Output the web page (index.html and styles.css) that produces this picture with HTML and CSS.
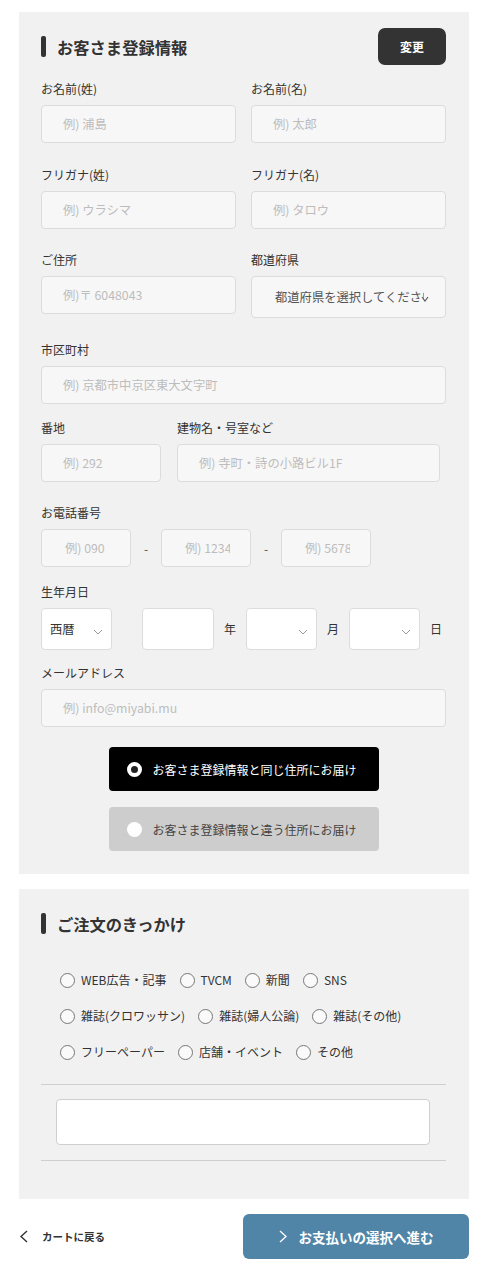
FILE: index.html
```html
<!DOCTYPE html>
<html lang="ja">
<head>
<meta charset="utf-8">
<title>お客さま登録情報</title>
<link rel="stylesheet" href="styles.css">
</head>
<body>
<div class="page">
  <section class="panel panel-customer">
    <div class="panel-head">
      <h2 class="panel-title">お客さま登録情報</h2>
      <button class="btn-edit" type="button">変更</button>
    </div>

    <div class="row cols-2 mt-14">
      <div class="field">
        <div class="label">お名前(姓)</div>
        <input class="input" placeholder="例) 浦島">
      </div>
      <div class="field">
        <div class="label">お名前(名)</div>
        <input class="input" placeholder="例) 太郎">
      </div>
    </div>

    <div class="row cols-2 mt-22">
      <div class="field">
        <div class="label">フリガナ(姓)</div>
        <input class="input" placeholder="例) ウラシマ">
      </div>
      <div class="field">
        <div class="label">フリガナ(名)</div>
        <input class="input" placeholder="例) タロウ">
      </div>
    </div>

    <div class="row cols-2 mt-21">
      <div class="field">
        <div class="label">ご住所</div>
        <input class="input" placeholder="例)〒 6048043">
      </div>
      <div class="field">
        <div class="label">都道府県</div>
        <div class="select select-pref">
          <span class="select-text">都道府県を選択してください</span>
          <svg class="chev-small" width="8" height="6" viewBox="0 0 8 6"><path d="M1 1 L4 5 L7 1" fill="none" stroke="#555" stroke-width="1.1"/></svg>
        </div>
      </div>
    </div>

    <div class="row mt-22">
      <div class="field">
        <div class="label">市区町村</div>
        <input class="input" placeholder="例) 京都市中京区東大文字町">
      </div>
    </div>

    <div class="row cols-addr mt-14">
      <div class="field">
        <div class="label">番地</div>
        <input class="input" placeholder="例) 292">
      </div>
      <div class="field">
        <div class="label">建物名・号室など</div>
        <input class="input" placeholder="例) 寺町・詩の小路ビル1F">
      </div>
    </div>

    <div class="row mt-21">
      <div class="field">
        <div class="label">お電話番号</div>
        <div class="phone">
          <input class="input input-tel" placeholder="例) 090">
          <span class="dash">-</span>
          <input class="input input-tel" placeholder="例) 1234">
          <span class="dash">-</span>
          <input class="input input-tel" placeholder="例) 5678">
        </div>
      </div>
    </div>

    <div class="row mt-15">
      <div class="field">
        <div class="label">生年月日</div>
        <div class="birth">
          <div class="select select-sm">
            <span class="select-text">西暦</span>
            <svg class="chev" width="10" height="6" viewBox="0 0 10 6"><path d="M1 1 L5 5 L9 1" fill="none" stroke="#999" stroke-width="1"/></svg>
          </div>
          <div class="box-year"></div>
          <span class="unit">年</span>
          <div class="select select-sm select-end">
            <svg class="chev" width="10" height="6" viewBox="0 0 10 6"><path d="M1 1 L5 5 L9 1" fill="none" stroke="#999" stroke-width="1"/></svg>
          </div>
          <span class="unit">月</span>
          <div class="select select-sm select-end">
            <svg class="chev" width="10" height="6" viewBox="0 0 10 6"><path d="M1 1 L5 5 L9 1" fill="none" stroke="#999" stroke-width="1"/></svg>
          </div>
          <span class="unit unit-last">日</span>
        </div>
      </div>
    </div>

    <div class="row mt-13">
      <div class="field">
        <div class="label">メールアドレス</div>
        <input class="input" placeholder="例) info@miyabi.mu">
      </div>
    </div>

    <div class="delivery">
      <div class="deliv-btn deliv-on"><span class="dot dot-on"></span>お客さま登録情報と同じ住所にお届け</div>
      <div class="deliv-btn deliv-off"><span class="dot"></span>お客さま登録情報と違う住所にお届け</div>
    </div>
  </section>

  <section class="panel panel-reason">
    <div class="panel-head">
      <h2 class="panel-title">ご注文のきっかけ</h2>
    </div>
    <div class="options">
      <div class="opt-row">
        <span class="opt"><span class="circle"></span>WEB広告・記事</span>
        <span class="opt"><span class="circle"></span>TVCM</span>
        <span class="opt"><span class="circle"></span>新聞</span>
        <span class="opt"><span class="circle"></span>SNS</span>
      </div>
      <div class="opt-row">
        <span class="opt"><span class="circle"></span>雑誌(クロワッサン)</span>
        <span class="opt"><span class="circle"></span>雑誌(婦人公論)</span>
        <span class="opt"><span class="circle"></span>雑誌(その他)</span>
      </div>
      <div class="opt-row">
        <span class="opt"><span class="circle"></span>フリーペーパー</span>
        <span class="opt"><span class="circle"></span>店舗・イベント</span>
        <span class="opt"><span class="circle"></span>その他</span>
      </div>
    </div>
    <hr class="divider divider-top">
    <div class="textarea-wrap"><textarea class="textarea"></textarea></div>
    <hr class="divider divider-bottom">
  </section>

  <div class="footer-bar">
    <a class="back" href="#">
      <svg width="9" height="13" viewBox="0 0 9 13"><path d="M8 1 L2 6.5 L8 12" fill="none" stroke="#333" stroke-width="1.4"/></svg>
      <span>カートに戻る</span>
    </a>
    <button class="btn-next" type="button">
      <svg width="8" height="13" viewBox="0 0 8 13"><path d="M1 1 L7 6.5 L1 12" fill="none" stroke="#fff" stroke-width="1.3"/></svg>
      <span>お支払いの選択へ進む</span>
    </button>
  </div>
</div>
</body>
</html>
```

FILE: styles.css
```css
* { box-sizing: border-box; }

body {
  margin: 0;
  background: #fff;
  font-family: "Noto Sans CJK JP", "Noto Sans", sans-serif;
  color: #333;
}

.page {
  width: 450px;
  margin: 12px 20px 0 19px;
}

.panel {
  background: #f1f1f1;
  padding: 16px 23px 0 22px;
}

.panel-customer { padding-bottom: 23px; }

.panel-reason {
  margin-top: 15px;
  padding-bottom: 38px;
}

.panel-head {
  display: flex;
  align-items: center;
  justify-content: space-between;
  height: 37px;
}

.panel-title {
  margin: 0;
  display: flex;
  align-items: center;
  font-size: 16.3px;
  font-weight: 700;
  line-height: 24px;
  color: #333;
}

.panel-title::before {
  content: "";
  width: 5px;
  height: 21px;
  margin-right: 11px;
  background: #333;
  border-radius: 2px;
}

.btn-edit {
  width: 68px;
  height: 37px;
  border: 0;
  border-radius: 7px;
  background: #333;
  color: #fff;
  font-family: inherit;
  font-size: 12px;
  font-weight: 700;
}

.mt-13 { margin-top: 13px; }
.mt-14 { margin-top: 14px; }
.mt-15 { margin-top: 15px; }
.mt-21 { margin-top: 21px; }
.mt-22 { margin-top: 22px; }

.row { display: flex; }
.row > .field { flex: 1 1 0; min-width: 0; }

.cols-2 { gap: 15px; }

.cols-addr { gap: 16px; }
.cols-addr > .field:first-child { flex: 0 0 120px; }
.cols-addr > .field:last-child { flex: 0 0 263px; }

.field { display: flex; flex-direction: column; }

.label {
  font-size: 12px;
  line-height: 20px;
  margin-bottom: 6px;
  color: #333;
}

.input {
  width: 100%;
  height: 38px;
  padding: 0 10px 0 21px;
  border: 1px solid #dcdcdc;
  border-radius: 4px;
  background: #f7f7f7;
  font-family: inherit;
  font-size: 12.3px;
  color: #333;
  outline: none;
}

.input::placeholder { color: #bdbdbd; }

.select {
  display: flex;
  align-items: center;
  height: 42px;
  border: 1px solid #dcdcdc;
  border-radius: 4px;
  background: #fff;
  font-size: 12.3px;
  color: #555;
}

.select-pref {
  background: #f7f7f7;
  padding: 0 16px 0 23px;
}

.select-pref .select-text {
  overflow: hidden;
  white-space: nowrap;
  flex: 0 1 auto;
  min-width: 0;
}

.chev-small {
  flex: none;
  margin-left: -3px;
  margin-top: 4px;
}

.phone {
  display: flex;
  align-items: center;
}

.input-tel {
  width: 90px;
  flex: none;
  padding: 0 20px 0 23px;
}

.dash {
  width: 30px;
  text-align: center;
  font-size: 12px;
  color: #555;
}

.birth {
  display: flex;
  align-items: center;
}

.birth > * { flex: none; }

.select-sm {
  width: 71px;
  padding: 0 8px 0 8px;
  justify-content: space-between;
  color: #333;
}

.select-end { justify-content: flex-end; }

.chev { margin-top: 5px; }

.box-year {
  width: 72px;
  height: 42px;
  margin-left: 30px;
  border: 1px solid #dcdcdc;
  border-radius: 4px;
  background: #fff;
}

.unit {
  width: 32px;
  text-align: center;
  font-size: 12px;
  color: #333;
  margin-top: -2px;
}

.unit-last {
  width: auto;
  margin-left: 10px;
}

.delivery {
  margin-top: 20px;
  display: flex;
  flex-direction: column;
  align-items: center;
  gap: 16px;
}

.deliv-btn {
  width: 270px;
  height: 44px;
  padding-left: 18px;
  display: flex;
  align-items: center;
  gap: 11px;
  border-radius: 4px;
  font-size: 12px;
}

.deliv-on { background: #000; color: #fff; }
.deliv-off { background: #cdcdcd; color: #444; }

.dot {
  width: 15px;
  height: 15px;
  border-radius: 50%;
  background: #fff;
  flex: none;
}

.dot-on {
  border: 4px solid #fff;
  background: #222;
}

.options {
  margin-top: 28px;
  padding-left: 19px;
  display: flex;
  flex-direction: column;
  gap: 16px;
}

.opt-row {
  display: flex;
  gap: 13px;
  height: 20px;
  align-items: center;
}

.opt {
  display: flex;
  align-items: center;
  gap: 6px;
  font-size: 12px;
  line-height: 20px;
  color: #333;
}

.circle {
  width: 15px;
  height: 15px;
  border: 1px solid #777;
  border-radius: 50%;
  background: #fafafa;
  flex: none;
}

.divider {
  margin: 0;
  border: 0;
  border-top: 1px solid #cfcfcf;
}

.divider-top { margin-top: 22px; }
.divider-bottom { margin-top: 15px; }

.textarea-wrap {
  margin-top: 14px;
  padding: 0 16px 0 15px;
}

.textarea {
  display: block;
  width: 100%;
  height: 46px;
  border: 1px solid #cfcfcf;
  border-radius: 4px;
  background: #fff;
  resize: none;
  font-family: inherit;
}

.footer-bar {
  margin-top: 15px;
  display: flex;
  align-items: center;
  justify-content: space-between;
}

.back {
  display: flex;
  align-items: center;
  gap: 14px;
  text-decoration: none;
  color: #333;
  font-size: 10.5px;
  font-weight: 700;
}

.btn-next {
  width: 226px;
  height: 45px;
  border: 0;
  border-radius: 6px;
  background: #5085a8;
  color: #fff;
  display: flex;
  align-items: center;
  justify-content: center;
  gap: 12px;
  font-family: inherit;
  font-size: 13.5px;
  font-weight: 700;
}
```
